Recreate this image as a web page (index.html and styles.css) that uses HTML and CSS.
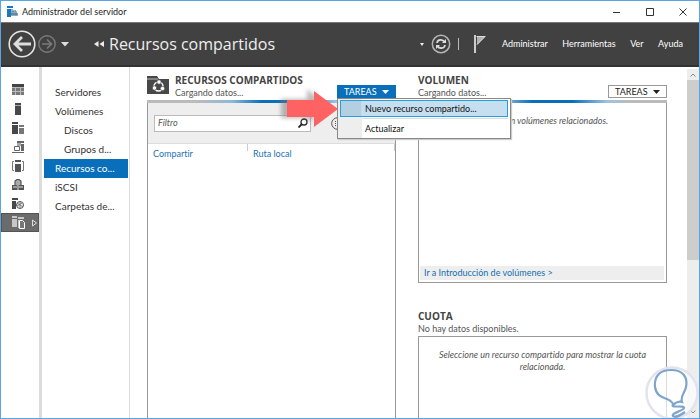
FILE: index.html
```html
<!DOCTYPE html>
<html lang="es">
<head>
<meta charset="utf-8">
<title>Administrador del servidor</title>
<link rel="stylesheet" href="styles.css">
</head>
<body>
<div class="window">
  <header class="titlebar">
    <svg class="app-icon" width="11" height="11" viewBox="0 0 11 11"><path d="M0 0h6v2H0zM0 3h4v8H0z" fill="#1979be"/><path d="M4 3h2v3H4z" fill="#74b6df"/><path d="M4 6h6l1 4H4z" fill="#8facbd"/><path d="M6 6V5h3v1M4 8h7" fill="none" stroke="#3b657e"/></svg>
    <span class="window-title">Administrador del servidor</span>
    <button class="caption" aria-label="Minimizar"><svg width="8" height="8" viewBox="0 0 8 8"><path d="M0 4.500h7" stroke="#333"/></svg></button>
    <button class="caption" aria-label="Maximizar"><svg width="8" height="8" viewBox="0 0 8 8"><path d="M.5.5h7v7h-7z" fill="none" stroke="#333"/></svg></button>
    <button class="caption" aria-label="Cerrar"><svg width="8" height="8" viewBox="0 0 8 8"><path d="M.5.5l7 7M7.500.5l-7 7" stroke="#333"/></svg></button>
  </header>

  <nav class="commandbar">
    <button class="bar-button" aria-label="Atrás"><svg width="28" height="28" viewBox="0 0 28 28" fill="none"><circle cx="14" cy="14" r="12.800" stroke="#e6e6e6" stroke-width="1.600"/><path d="M23 14H7M14 7l-7 7 7 7" stroke="#ddd" stroke-width="2.800"/></svg></button>
    <button class="bar-button forward" aria-label="Adelante"><svg width="18" height="18" viewBox="0 0 18 18" fill="none" stroke="#7a7a7a"><circle cx="9" cy="9" r="8.200" stroke-width="1.400"/><path d="M4 9h9M9 4.500l4.500 4.500L9 13.500" stroke-width="1.600"/></svg></button>
    <button class="bar-button history" aria-label="Historial"><svg width="8" height="5" viewBox="0 0 8 5"><path d="M0 0h8L4 4.500z" fill="#ddd"/></svg></button>
    <svg class="crumb" width="10" height="6" viewBox="0 0 10 6"><path d="M4.500 0v6L0 3zM10 0v6L5.500 3z" fill="#eee"/></svg>
    <h1>Recursos compartidos</h1>
    <button class="bar-button" aria-label="Opciones de ruta"><svg width="4" height="3" viewBox="0 0 4 3"><path d="M0 0h4L2 3z" fill="#eee"/></svg></button>
    <button class="bar-button refresh" aria-label="Actualizar"><svg width="20" height="20" viewBox="0 0 20 20" fill="none"><circle cx="10" cy="10" r="8.700" stroke="#b5b5b5" stroke-width="1.500"/><path d="M6 9c.5-4 6-4 7.500-1M14 11c-.5 4-6 4-7.500 1" stroke="#ddd" stroke-width="1.700"/><path d="M15 5v4h-4zM5 15v-4h4z" fill="#ddd"/></svg></button>
    <span class="bar-rule"></span>
    <button class="bar-button flag" aria-label="Notificaciones"><svg width="12" height="18" viewBox="0 0 12 18"><path d="M1 0v18" stroke="#ddd" stroke-width="1.800"/><path d="M3 1h9L3 10z" fill="#b0b0b0"/><path d="M2.500 1.500H11L3 9.500" fill="none" stroke="#ddd"/></svg></button>
    <div class="menus">
      <a href="#">Administrar</a>
      <a href="#">Herramientas</a>
      <a href="#">Ver</a>
      <a href="#">Ayuda</a>
    </div>
  </nav>

  <main class="workspace">
    <nav class="rail" aria-label="Roles">
      <button aria-label="Panel"><svg width="12" height="12" viewBox="0 0 12 12"><path d="M0 0h12v3H0z" fill="#444"/><path d="M0 3h12v8H0z" fill="#bbb"/><path d="M0 4h3v3H0zM4 4h4v3H4zM9 4h3v3H9zM0 8h3v3H0zM4 8h4v3H4zM9 8h3v3H9z" fill="#777"/></svg></button>
      <button aria-label="Servidor local"><svg width="12" height="12" viewBox="0 0 12 12"><path d="M3 0h6v2H3zM3 3h6v9H3z" fill="#484848"/><path d="M3 2h6v1H3z" fill="#aaa"/></svg></button>
      <button aria-label="Todos los servidores"><svg width="12" height="12" viewBox="0 0 12 12"><path d="M0 0h6v2H0zM0 3h6v9H0z" fill="#484848"/><path d="M7 3h5v2H7zM7 6h5v6H7z" fill="#777"/></svg></button>
      <button aria-label="AD DS"><svg width="12" height="12" viewBox="0 0 12 12"><path d="M5 0h7v2H5zM9 3h3v7H9z" fill="#666"/><path d="M5 2h4v3H5z" fill="#aaa"/><path d="M2.500 5.500h5v4h-5zM0 11.500h12" fill="none" stroke="#666"/></svg></button>
      <button aria-label="DNS"><svg width="12" height="12" viewBox="0 0 12 12"><path d="M3 0h6v2H3zM3 4h6v8H3z" fill="#555"/><path d="M2 1.500H.5v9H2M10 1.500h1.500v9H10" fill="none" stroke="#777"/></svg></button>
      <button aria-label="DHCP"><svg width="12" height="12" viewBox="0 0 12 12"><path d="M3 6V2l2-1.500h2L9 2v4" fill="#aaa" stroke="#555" stroke-width="1.200"/><path d="M0 6h12v5H0z" fill="#555"/><path d="M1 8h4M7 8h4M6 6v5" stroke="#ddd"/></svg></button>
      <button aria-label="IIS"><svg width="12" height="12" viewBox="0 0 12 12"><path d="M0 0h6v2H0zM0 3h4v8H0z" fill="#484848"/><circle cx="8" cy="7" r="3.500" fill="#eee" stroke="#555"/><path d="M5 5l6 4M8 4v6M5 8l5-3" stroke="#666" stroke-width=".8"/></svg></button>
      <button class="selected" aria-label="Servicios de archivos"><svg width="13" height="13" viewBox="0 0 13 13"><path d="M0 0h5v2H0zM6 1h6v2H6zM0 3h5v8H0zM6 4h1v8H6z" fill="#c8c8c8"/><path d="M7.500 4.500h3l2 2v6h-5z" fill="#777" stroke="#fff"/></svg><svg class="expand" width="5" height="8" viewBox="0 0 5 8"><path d="M.5 1v6l4-3z" fill="none" stroke="#ddd"/></svg></button>
    </nav>

    <nav class="sections">
      <a href="#">Servidores</a>
      <a href="#">Volúmenes</a>
      <a class="nested" href="#">Discos</a>
      <a class="nested" href="#">Grupos d...</a>
      <a class="current" href="#">Recursos co...</a>
      <a href="#">iSCSI</a>
      <a href="#">Carpetas de...</a>
    </nav>

    <div class="content">
      <section class="tile shares">
        <div class="tile-head">
          <svg class="tile-icon" width="22" height="18" viewBox="0 0 22 18"><path d="M0 0h10l2 3h10v15H0z" fill="#484848"/><path d="M0 3h11" stroke="#bbb"/><circle cx="11.500" cy="10.500" r="4.500" fill="none" stroke="#fff" stroke-width="1.500"/><g fill="#fff" stroke="#484848" stroke-width=".7"><circle cx="12" cy="6" r="2.200"/><circle cx="7.500" cy="12" r="2.200"/><circle cx="15.500" cy="12.500" r="2.200"/></g></svg>
          <div class="tile-titles"><h2>RECURSOS COMPARTIDOS</h2><p>Cargando datos...</p></div>
          <div class="task-menu">
            <button class="tasks open" aria-expanded="true">TAREAS<svg width="7" height="4" viewBox="0 0 7 4"><path d="M0 0h7L3.500 4z" fill="currentColor"/></svg></button>
            <div class="dropdown" role="menu">
              <button class="highlighted" role="menuitem">Nuevo recurso compartido...</button>
              <hr>
              <button role="menuitem">Actualizar</button>
            </div>
            <svg class="pointer" width="62" height="46" viewBox="0 0 62 46"><defs><filter id="soft" x="-20%" y="-20%" width="140%" height="140%"><feGaussianBlur stdDeviation="2"/></filter></defs><path d="M4 13h26V3l20 17-20 17V32H4z" fill="#777" opacity=".5" filter="url(#soft)"/><path d="M10 14h27V5l24 18-24 18V31H10z" fill="#ff6262"/></svg>
          </div>
        </div>
        <div class="progress"></div>
        <div class="panel">
          <div class="filter-row">
            <label class="filter"><input type="text" placeholder="Filtro" aria-label="Filtro"><svg width="10" height="10" viewBox="0 0 10 10" fill="none" stroke="#222"><circle cx="6" cy="4" r="3" stroke-width="1.300"/><path d="M4 6L.5 9.500" stroke-width="1.800"/></svg></label>
            <button class="options" aria-label="Opciones"><svg width="13" height="13" viewBox="0 0 13 13" fill="none" stroke="#555"><circle cx="6.500" cy="6.500" r="5.800"/><path d="M4 4.500h1M6 4.500h4M4 6.500h1M6 6.500h4M4 8.500h1M6 8.500h4"/></svg></button>
          </div>
          <table>
            <thead><tr><th>Compartir</th><th>Ruta local</th></tr></thead>
          </table>
        </div>
      </section>

      <div class="side">
        <section class="tile">
          <div class="tile-head">
            <div class="tile-titles"><h2>VOLUMEN</h2><p>Cargando datos...</p></div>
            <button class="tasks">TAREAS<svg width="7" height="4" viewBox="0 0 7 4"><path d="M0 0h7L3.500 4z" fill="currentColor"/></svg></button>
          </div>
          <div class="progress"></div>
          <div class="panel volume">
            <p class="message">No existen volúmenes relacionados.</p>
            <a class="panel-link" href="#">Ir a Introducción de volúmenes &gt;</a>
          </div>
        </section>
        <section class="tile quota">
          <div class="quota-head"><h2>CUOTA</h2><p>No hay datos disponibles.</p></div>
          <div class="panel closed">
            <p class="message">Seleccione un recurso compartido para mostrar la cuota relacionada.</p>
          </div>
        </section>
      </div>
    </div>

    <div class="scrollbar">
      <svg width="6" height="4" viewBox="0 0 6 4"><path d="M.5 3.500L3 1l2.500 2.500" fill="none" stroke="#888"/></svg>
      <div class="thumb"></div>
      <svg width="6" height="4" viewBox="0 0 6 4"><path d="M.5.5L3 3 5.500.5" fill="none" stroke="#888"/></svg>
    </div>
  </main>
  <svg class="watermark" width="56" height="56" viewBox="0 0 56 56" fill="none"><circle cx="28" cy="28" r="25.500" fill="#fff" fill-opacity=".65" stroke="#e3e3f0" stroke-width="2.500"/><path d="M29 39c-3-8-16-3-18-17C10 10 17 5 27 5c12 0 17 7 15 17-1 6-6 9-4 15-3-1-7 1-9 3-3 3 12 0 11 3-1 3-13 5-11 8 2 2 8-1 12-4" stroke="#7fa5cc" stroke-width="2.200"/></svg>
</div>
</body>
</html>
```
FILE: styles.css
```css
* { box-sizing: border-box; }
body { margin: 0; font: 9px/12px Lato, "Open Sans", sans-serif; font-variant-ligatures: none; color: #333; }
h1, h2, p { margin: 0; font-weight: 400; }
h1, h2 { font-family: "Open Sans", sans-serif; }
button { margin: 0; padding: 0; border: 0; background: none; font: inherit; color: inherit; }
a { color: inherit; text-decoration: none; }
svg { display: block; flex: none; }

.window { position: relative; display: flex; flex-direction: column; height: 100vh; overflow: hidden; border: 1px solid #5ba5e3; background: #fff; }

.titlebar { display: flex; align-items: center; height: 21px; flex: none; padding: 0 12px 0 6px; }
.window-title { flex: 1; margin-left: 4px; color: #222; }
.caption { margin-left: 25px; }

.commandbar { display: flex; align-items: center; height: 45px; flex: none; padding: 0 16px 0 7px; border-top: 1px solid #777; border-bottom: 2px solid #333; background: #414141; color: #fff; }
.forward { margin-left: 2px; }
.history { margin-left: 5px; }
.crumb { margin: 0 5px 0 25px; }
.commandbar h1 { flex: 1; font-size: 16px; line-height: 24px; white-space: nowrap; color: #eee; }
.refresh { margin-left: 7px; }
.bar-rule { width: 1px; height: 12px; margin: 0 15px 0 7px; background: #bbb; }
.flag { margin-right: 16px; }
.menus { display: flex; justify-content: space-between; width: 181px; }

.workspace { display: flex; flex: 1; min-height: 0; }
.rail { width: 41px; flex: none; padding-top: 13px; border-right: 3px solid #dcdcdc; }
.rail button { display: flex; align-items: center; width: 100%; height: 19px; padding-left: 11px; }
.rail .selected { background: #6b6b6b; border: 1px solid #555; padding-left: 10px; }
.expand { margin-left: 7px; }

.sections { width: 88px; flex: none; padding: 16px 1px 0 2px; border-right: 1px solid #dcdcdc; font-size: 10px; }
.sections a { display: block; height: 19px; padding-left: 11px; line-height: 19px; white-space: nowrap; }
.sections .nested { padding-left: 20px; }
.sections .current { background: #0a6fba; color: #fff; }

.content { display: grid; grid-template-columns: 1fr 1fr; gap: 22px; flex: 1; min-width: 0; padding: 7px 20px 0 17px; }
.tile { display: flex; flex-direction: column; min-width: 0; }
.tile-head { display: flex; height: 26px; }
.tile-icon { margin: 2px 6px 0 0; }
.tile-titles { flex: 1; white-space: nowrap; }
.tile p { color: #555; }
h2 { font-size: 10px; line-height: 13px; font-weight: 700; color: #444; }
.task-menu { position: relative; z-index: 2; }
.tasks { display: flex; align-items: center; justify-content: space-between; width: 59px; height: 13px; margin-top: 11px; padding: 0 6px; border: 1px solid #999; background: #fff; color: #222; }
.tasks.open { border-color: #0a6fba; background: #0a6fba; color: #fff; }

.dropdown { position: absolute; top: 24px; left: 0; width: 174px; padding: 1px 2px; border: 1px solid #888; background: linear-gradient(90deg, #eee 24px, #fff 24px); box-shadow: 1px 1px 1px #ccc; }
.dropdown button { display: block; width: 100%; height: 17px; padding-left: 24px; border: 1px solid transparent; line-height: 15px; text-align: left; white-space: nowrap; color: #111; }
.dropdown .highlighted { border-color: #26a0da; background: linear-gradient(90deg, #b5cfe2 20px, #c5def0 20px); }
.dropdown hr { height: 1px; margin: 1px 0 1px 22px; border: 0; background: #ddd; }
.pointer { position: absolute; top: 12px; right: 57px; }

.progress { height: 3px; flex: none; background: linear-gradient(90deg, #bbb 20%, #8fb8d8 34%, #0a6fba 46%, #0a6fba 62%, #9fc3de 76%, #bbb 86%); }
.panel { display: flex; flex-direction: column; flex: 1; border: 1px solid #999; border-width: 0 1px; }
.filter-row { display: flex; align-items: center; height: 41px; padding: 0 6px; background: #eee; border-bottom: 1px solid #ddd; }
.filter { display: flex; align-items: center; width: 157px; height: 17px; padding-right: 2px; border: 1px solid #bbb; background: #fff; }
.filter input { flex: 1; min-width: 0; padding: 0 3px; border: 0; outline: 0; background: none; font: inherit; font-style: italic; color: #555; }
.filter input::placeholder { color: #555; opacity: 1; }
.options { margin-left: 20px; }
table { width: 100%; border-collapse: collapse; table-layout: fixed; }
th { padding: 4px 5px; text-align: left; font-weight: 400; color: #1c72b5; background: linear-gradient(#ccc, #ccc) right top / 1px 7px no-repeat; }
th:first-child { width: 100px; }

.side { display: flex; flex-direction: column; min-width: 0; }
.volume { height: 180px; flex: none; border-width: 0 1px 1px; padding: 0 2px 2px 1px; }
.message { flex: 1; padding: 12px 16px 0; text-align: center; font-style: italic; }
.panel-link { padding: 1px 4px; background: #eee; color: #156fae; }
.quota { flex: 1; margin-top: 27px; }
.closed { border-top-width: 1px; margin-top: 1px; }

.scrollbar { display: flex; flex-direction: column; align-items: center; width: 12px; flex: none; margin-top: 2px; padding: 4px 0; background: #ededed; }
.thumb { width: 100%; height: 180px; flex: none; margin: 3px 0 auto; background: #cdcdcd; }
.watermark { position: absolute; right: -1px; bottom: -3px; z-index: 3; }
```
